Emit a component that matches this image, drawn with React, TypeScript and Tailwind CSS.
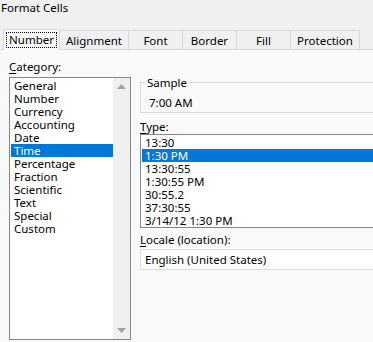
import React from "react";

const FONT = { fontFamily: '"Segoe UI", "Noto Sans", sans-serif' };

const TABS = [
  { label: "Number", w: 57 },
  { label: "Alignment", w: 69 },
  { label: "Font", w: 54 },
  { label: "Border", w: 54 },
  { label: "Fill", w: 54 },
  { label: "Protection", w: 69 },
];

const CATEGORIES = [
  "General",
  "Number",
  "Currency",
  "Accounting",
  "Date",
  "Time",
  "Percentage",
  "Fraction",
  "Scientific",
  "Text",
  "Special",
  "Custom",
];

const TYPES = [
  "13:30",
  "1:30 PM",
  "13:30:55",
  "1:30:55 PM",
  "30:55.2",
  "37:30:55",
  "3/14/12 1:30 PM",
];

function Underlined({ first, rest }: { first: string; rest: string }) {
  return (
    <span>
      <span className="underline underline-offset-[2px]">{first}</span>
      {rest}
    </span>
  );
}

export default function App() {
  return (
    <div
      className="w-[373px] h-[342px] overflow-hidden bg-[#f9f9f9] text-[11.5px] text-black"
      style={FONT}
    >
      {/* Title + tab strip */}
      <div className="bg-[#f0f0f0]">
        <div className="h-[30px] pl-[1px] pt-px leading-[13px]">Format Cells</div>
        <div className="flex items-end pl-[3px] h-[20px] border-b border-[#d9d9d9]">
          {TABS.map((t, i) =>
            i === 0 ? (
              <div
                key={t.label}
                className="relative -mb-px h-[21px] bg-[#f9f9f9] border border-b-0 border-[#d9d9d9] flex items-center justify-center"
                style={{ width: t.w }}
              >
                <span className="px-[2px] leading-[14px] border border-dotted border-black">
                  {t.label}
                </span>
              </div>
            ) : (
              <div
                key={t.label}
                className="h-[19px] bg-[#f0f0f0] border border-b-0 border-l-0 border-[#d9d9d9] flex items-center justify-center leading-[13px]"
                style={{ width: t.w }}
              >
                {t.label}
              </div>
            )
          )}
        </div>
      </div>

      <div className="flex pl-[9px]">
        {/* Category */}
        <div className="w-[122px] shrink-0">
          <div className="mt-[10px] h-[14px] leading-[13px]">
            <Underlined first="C" rest="ategory:" />
          </div>
          <div className="mt-[3px] h-[263px] border border-[#828790] bg-white flex">
            <div className="flex-1 pt-px pl-px">
              {CATEGORIES.map((c) => (
                <div
                  key={c}
                  className={
                    "h-[13px] leading-[13px] pl-[3px] " +
                    (c === "Time" ? "bg-[#0078d7] text-white" : "")
                  }
                >
                  {c}
                </div>
              ))}
            </div>
            <div className="w-[17px] bg-[#f0f0f0] flex flex-col items-center justify-between py-[6px]">
              <svg width="9" height="5" viewBox="0 0 9 5">
                <path d="M0 5 L4.5 0 L9 5 Z" fill="#a3a3a3" />
              </svg>
              <svg width="9" height="5" viewBox="0 0 9 5">
                <path d="M0 0 L4.5 5 L9 0 Z" fill="#a3a3a3" />
              </svg>
            </div>
          </div>
        </div>

        {/* Right side */}
        <div className="ml-[9px] w-[250px] shrink-0">
          <div className="relative mt-[32px] h-[31px] border border-[#dcdcdc]">
            <span className="absolute -top-[7px] left-[5px] bg-[#f9f9f9] px-px leading-[13px]">
              Sample
            </span>
            <div className="pt-[13px] pl-[8px] leading-[13px]">7:00 AM</div>
          </div>

          <div className="mt-[7px] h-[14px] leading-[13px]">
            <Underlined first="T" rest="ype:" />
          </div>
          <div className="h-[94px] border border-[#828790] bg-white pt-px pl-px">
            {TYPES.map((t) => (
              <div
                key={t}
                className={
                  "h-[13px] leading-[13px] pl-[3px] " +
                  (t === "1:30 PM" ? "bg-[#0078d7] text-white" : "")
                }
              >
                {t}
              </div>
            ))}
          </div>

          <div className="mt-[5px] h-[14px] leading-[13px]">
            <Underlined first="L" rest="ocale (location):" />
          </div>
          <div className="mt-[2px] h-[21px] border border-[#dcdcdc] bg-white flex items-center pl-[4px]">
            English (United States)
          </div>
        </div>
      </div>
    </div>
  );
}
